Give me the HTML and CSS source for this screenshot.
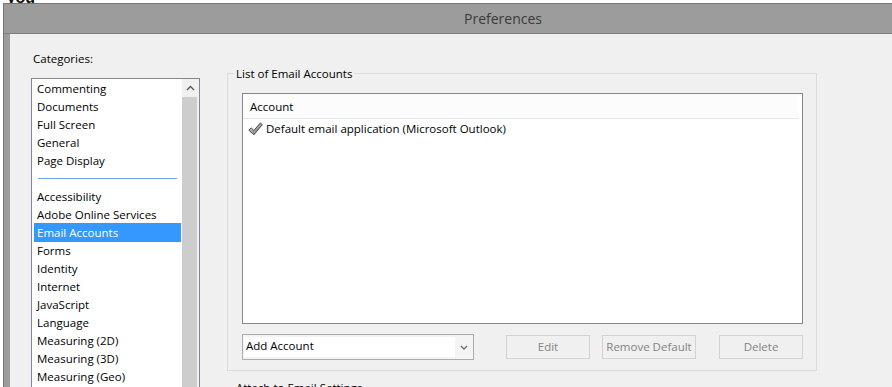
FILE: index.html
```html
<!DOCTYPE html>
<html lang="en">

<head>
    <meta charset="UTF-8">
    <meta name="viewport" content="width=device-width, initial-scale=1.0">
    <title>Preferences</title>
    <link rel="stylesheet" href="styles.css">
</head>

<body>
    <div class="clip"><span>r you</span></div>
    <div class="window">
        <div class="titlebar">Preferences</div>
        <div class="frame">
            <div class="client">
                <div class="categories">
                    <div class="cat-label">Categories:</div>
                    <div class="listbox">
                        <ul class="cat-list">
                            <li class="cat-item">Commenting</li>
                            <li class="cat-item">Documents</li>
                            <li class="cat-item">Full Screen</li>
                            <li class="cat-item">General</li>
                            <li class="cat-item">Page Display</li>
                            <li class="cat-sep"><span></span></li>
                            <li class="cat-item">Accessibility</li>
                            <li class="cat-item">Adobe Online Services</li>
                            <li class="cat-item selected">Email Accounts</li>
                            <li class="cat-item">Forms</li>
                            <li class="cat-item">Identity</li>
                            <li class="cat-item">Internet</li>
                            <li class="cat-item">JavaScript</li>
                            <li class="cat-item">Language</li>
                            <li class="cat-item">Measuring (2D)</li>
                            <li class="cat-item">Measuring (3D)</li>
                            <li class="cat-item">Measuring (Geo)</li>
                        </ul>
                        <div class="vscroll">
                            <div class="scroll-up">
                                <svg width="9" height="6" viewBox="0 0 9 6"><path d="M1 5 L4.5 1.5 L8 5" fill="none" stroke="#5a5a5a" stroke-width="1.4"/></svg>
                            </div>
                            <div class="scroll-thumb"></div>
                        </div>
                    </div>
                </div>

                <div class="panel">
                    <fieldset class="group">
                        <legend>List of Email Accounts</legend>
                        <div class="accounts">
                            <div class="accounts-head">Account</div>
                            <div class="accounts-row">
                                <svg class="check" width="15" height="14" viewBox="0 0 15 14">
                                    <defs>
                                        <linearGradient id="chk" x1="0" y1="0" x2="1" y2="1">
                                            <stop offset="0" stop-color="#d8d8d8"/>
                                            <stop offset="1" stop-color="#6a6a6a"/>
                                        </linearGradient>
                                    </defs>
                                    <path d="M0.8 8.2 L3.2 5.9 L5.9 8.4 L12.4 0.9 L14.3 2.7 L5.9 12.8 Z" fill="url(#chk)" stroke="#3f3f3f" stroke-width="0.9" stroke-linejoin="round"/>
                                </svg>
                                <span>Default email application (Microsoft Outlook)</span>
                            </div>
                        </div>
                        <div class="actions">
                            <div class="combo">
                                <span class="combo-field">Add Account</span>
                                <span class="combo-arrow">
                                    <svg width="8" height="5" viewBox="0 0 8 5"><path d="M1 1 L4 4 L7 1" fill="none" stroke="#6d6d6d" stroke-width="1.3"/></svg>
                                </span>
                            </div>
                            <button class="btn btn-edit" disabled>Edit</button>
                            <button class="btn btn-remove" disabled>Remove Default</button>
                            <button class="btn btn-delete" disabled>Delete</button>
                        </div>
                    </fieldset>
                    <fieldset class="group group-attach">
                        <legend>Attach to Email Settings</legend>
                    </fieldset>
                </div>
            </div>
        </div>
    </div>
</body>

</html>
```

FILE: styles.css
```css
body {
    margin: 0;
    background-color: white;
    overflow: hidden;
    font-family: "Open Sans", "Noto Sans", sans-serif;
    font-size: 11.5px;
    color: black;
}

.clip {
    height: 3px;
    overflow: hidden;
}

.clip span {
    display: block;
    margin: -10px 0 0 -4px;
    font: bold 16px/16px "Liberation Sans", sans-serif;
    color: #111;
}

.window {
    width: 998px;
    margin-left: 3px;
    background-color: #9c9c9c;
    border-top: 1px solid #777;
    border-left: 1px solid #777;
}

.titlebar {
    height: 29px;
    line-height: 29px;
    text-align: center;
    font-size: 14px;
    color: #3a3a3a;
    border-bottom: 1px solid #7d7d7d;
}

.frame {
    padding-left: 6px;
}

.client {
    display: flex;
    height: 400px;
    background-color: #f0f0f0;
}

/* left column */

.categories {
    width: 169px;
    padding-left: 21px;
}

.cat-label {
    margin: 17px 0 11px 2px;
    line-height: 16px;
}

.listbox {
    display: flex;
    height: 330px;
    background-color: white;
    border: 1px solid #828790;
}

.cat-list {
    width: 150px;
    margin: 0;
    padding: 1px 0 0;
    list-style: none;
}

.cat-item {
    height: 18px;
    line-height: 18px;
    margin: 0 1px 0 2px;
    padding-left: 3px;
    white-space: nowrap;
}

.cat-item.selected {
    margin-top: -1px;
    padding-top: 1px;
    background-color: #3399ff;
    color: white;
}

.cat-sep {
    height: 18px;
    padding: 8px 5px 0 6px;
    box-sizing: border-box;
}

.cat-sep span {
    display: block;
    height: 1px;
    background-color: #6ea8dc;
}

.vscroll {
    width: 17px;
    display: flex;
    flex-direction: column;
    background-color: #f0f0f0;
}

.scroll-up {
    height: 18px;
    display: flex;
    align-items: center;
    justify-content: center;
}

.scroll-thumb {
    flex: 1;
    margin-right: 2px;
    background-color: #cdcdcd;
}

/* right panel */

.panel {
    margin-left: 27px;
    padding-top: 31px;
}

.group {
    width: 561px;
    margin: 0;
    padding: 12px 13px 10px 14px;
    border: 1px solid #dcdcdc;
}

.group legend {
    margin-left: -8px;
    padding: 1px 2px 0;
    line-height: 15px;
}

.group-attach {
    margin-top: 8px;
    height: 60px;
}

.accounts {
    height: 229px;
    background-color: white;
    border: 1px solid #828790;
}

.accounts-head {
    height: 24px;
    line-height: 26px;
    margin-right: 3px;
    padding-left: 7px;
    background-color: #fcfcfc;
    border-bottom: 1px solid #e3e8ee;
}

.accounts-row {
    display: flex;
    align-items: center;
    height: 19px;
    padding-left: 5px;
    white-space: nowrap;
}

.accounts-row .check {
    margin-right: 3px;
}

.actions {
    display: flex;
    align-items: flex-start;
    margin-top: 10px;
}

.combo {
    display: flex;
    width: 228px;
    height: 22px;
    padding: 1px;
    background-color: #f4f4f4;
    border: 1px solid #acacac;
}

.combo-field {
    flex: 1;
    margin: 1px 0;
    padding-left: 2px;
    line-height: 18px;
    background-color: white;
}

.combo-arrow {
    width: 17px;
    display: flex;
    align-items: center;
    justify-content: center;
}

.btn {
    height: 24px;
    margin-top: 1px;
    padding: 0 0 2px;
    font: inherit;
    color: #838383;
    background-color: #f0f0f0;
    border: 1px solid #d2d2d2;
}

.btn-edit {
    width: 84px;
    margin-left: 32px;
}

.btn-remove {
    width: 94px;
    margin-left: 12px;
}

.btn-delete {
    width: 84px;
    margin-left: 23px;
}
```
